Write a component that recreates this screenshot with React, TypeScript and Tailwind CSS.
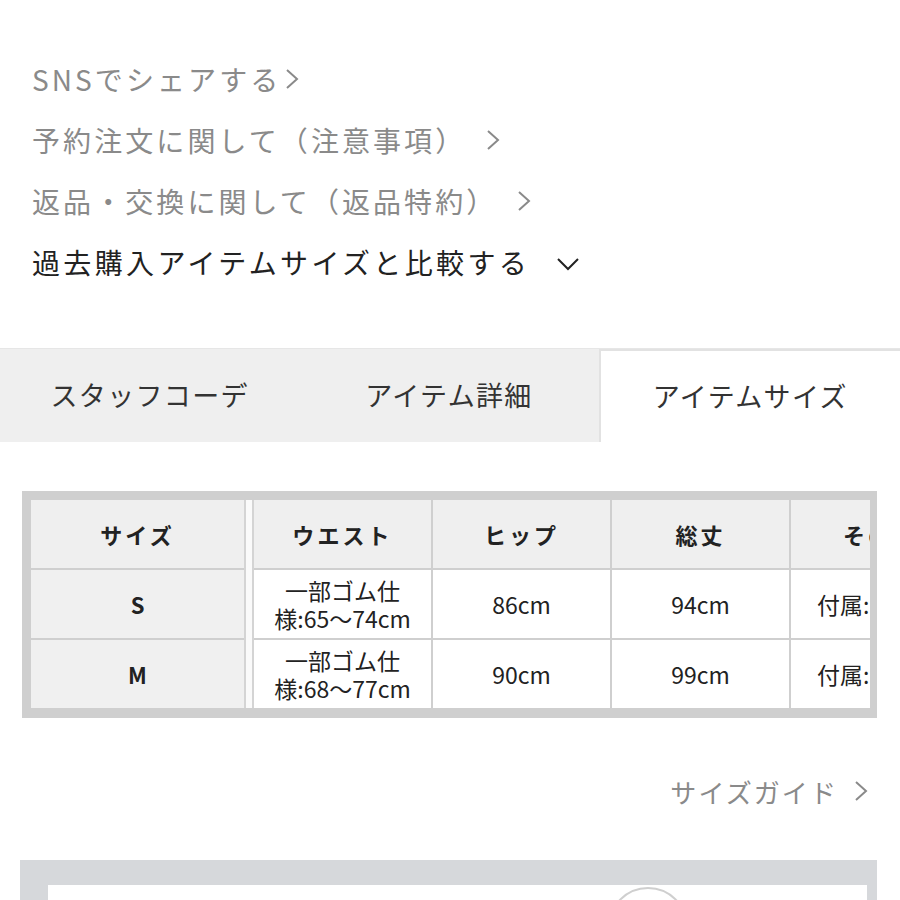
import React from 'react';

const font = { fontFamily: '"Noto Sans CJK JP", "Noto Sans", sans-serif' };

function ChevronRight({ className = '' }: { className?: string }) {
  return (
    <svg className={className} width="14" height="24" viewBox="0 0 14 24" fill="none" stroke="currentColor" strokeWidth={2}>
      <path d="M2 3l10 9-10 9" />
    </svg>
  );
}

function ChevronDown() {
  return (
    <svg width="24" height="14" viewBox="0 0 24 14" fill="none" stroke="currentColor" strokeWidth={2}>
      <path d="M2 2l10 10 10-10" />
    </svg>
  );
}

const links = [
  { label: 'SNSでシェアする', gap: false },
  { label: '予約注文に関して（注意事項）', gap: true },
  { label: '返品・交換に関して（返品特約）', gap: true },
];

const tabs = ['スタッフコーデ', 'アイテム詳細', 'アイテムサイズ'];

const rows = [
  { size: 'S', waist: ['一部ゴム仕', '様:65〜74cm'], hip: '86cm', length: '94cm', other: '付属:' },
  { size: 'M', waist: ['一部ゴム仕', '様:68〜77cm'], hip: '90cm', length: '99cm', other: '付属:' },
];

export default function App() {
  return (
    <div className="w-[900px] h-[900px] overflow-hidden bg-white" style={font}>
      {/* Links */}
      <div className="flex flex-col pt-[48px] pl-[32px]">
        {links.map((l) => (
          <div key={l.label} className="flex items-center h-[61px] text-[28px] tracking-[0.11em] text-[#8a8a8a]">
            <span>{l.label}</span>
            <ChevronRight className={l.gap ? 'ml-[20px]' : 'ml-[4px]'} />
          </div>
        ))}
        <div className="flex items-center h-[61px] text-[28px] tracking-[0.12em] text-[#222]">
          <span>過去購入アイテムサイズと比較する</span>
          <span className="ml-[26px] mt-[4px]"><ChevronDown /></span>
        </div>
      </div>

      {/* Tabs */}
      <div className="mt-[56px] flex h-[94px] bg-[#efefef] border-t border-[#e6e6e6]">
        {tabs.map((t, i) => (
          <div
            key={t}
            className={
              i === 2
                ? 'flex-1 flex items-center justify-center bg-white border-l-2 border-t-2 border-[#e2e2e2] text-[27px] text-[#333] tracking-[0.05em]'
                : 'flex-1 flex items-center justify-center text-[27px] text-[#333] tracking-[0.05em]'
            }
          >
            {t}
          </div>
        ))}
      </div>

      {/* Size table */}
      <div className="mt-[49px] ml-[22px] w-[855px] flex bg-[#cfcfcf] pt-[9px] pb-[10px] pl-[9px] pr-[7px]">
        <div className="grid grid-rows-[68px_68px_68px] gap-y-[2px] w-[213px] shrink-0">
          <div className="bg-[#efefef] flex items-center justify-center text-[22px] font-bold tracking-[0.14em] text-[#222]">サイズ</div>
          {rows.map((r) => (
            <div key={r.size} className="bg-[#f0f0f0] flex items-center justify-center text-[22px] font-bold text-[#222]">{r.size}</div>
          ))}
        </div>
        <div className="w-[10px] shrink-0 bg-[#fafafa] border-x-2 border-[#d4d4d4]" />
        <div className="flex-1 overflow-hidden">
          <div className="grid grid-cols-[177px_177px_177px_177px] grid-rows-[68px_68px_68px] gap-[2px] w-[714px]">
            {['ウエスト', 'ヒップ', '総丈', 'その他'].map((h, i) => (
              <div
                key={h}
                className={
                  i === 3
                    ? 'bg-[#efefef] flex items-center pl-[52px] text-[22px] font-bold tracking-[0.14em] text-[#222] whitespace-nowrap'
                    : 'bg-[#efefef] flex items-center justify-center text-[22px] font-bold tracking-[0.14em] text-[#222]'
                }
              >
                {h}
              </div>
            ))}
            {rows.map((r) => (
              <React.Fragment key={r.size}>
                <div className="bg-white flex items-center justify-center text-center text-[23px] leading-[28px] text-[#222]">
                  <p>
                    {r.waist[0]}
                    <br />
                    {r.waist[1]}
                  </p>
                </div>
                <div className="bg-white flex items-center justify-center text-[23px] text-[#222]">{r.hip}</div>
                <div className="bg-white flex items-center justify-center text-[23px] text-[#222]">{r.length}</div>
                <div className="bg-white flex items-center pl-[26px] text-[23px] text-[#222] whitespace-nowrap">{r.other}</div>
              </React.Fragment>
            ))}
          </div>
        </div>
      </div>

      {/* Size guide */}
      <div className="mt-[53px] flex items-center justify-end pr-[32px] h-[40px] text-[26px] tracking-[0.08em] text-[#8a8a8a]">
        <span>サイズガイド</span>
        <ChevronRight className="ml-[16px]" />
      </div>

      {/* Bottom framed image */}
      <div className="mt-[49px] ml-[20px] w-[857px] h-[60px] bg-[#d6d8db] pt-[25px] pl-[28px] pr-[10px]">
        <div className="relative h-full bg-white overflow-hidden">
          <div className="absolute left-[560px] top-[2px] w-[80px] h-[80px] rounded-full border-2 border-[#cfcfcf]" />
        </div>
      </div>
    </div>
  );
}
